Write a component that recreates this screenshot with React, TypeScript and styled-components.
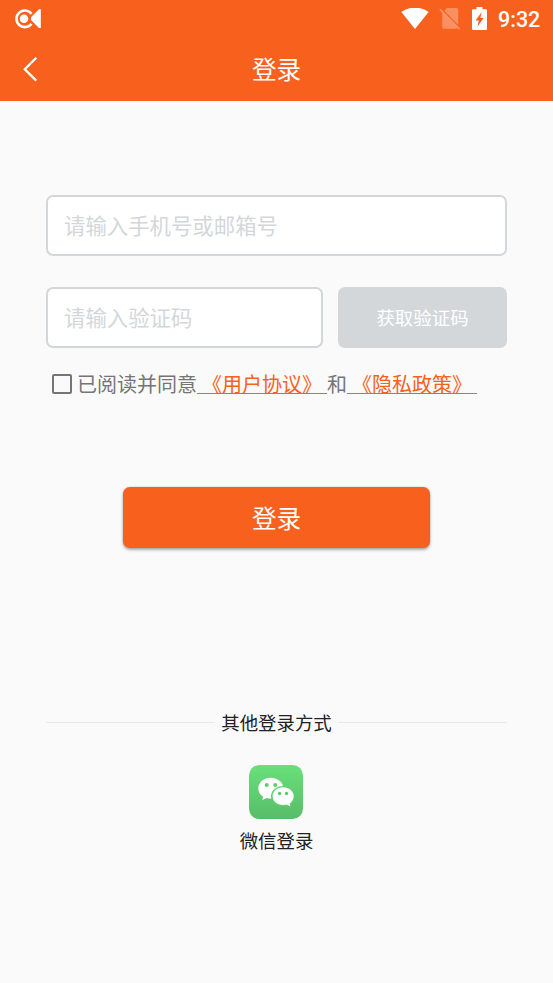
import React, { useState } from 'react';
import styled, { createGlobalStyle } from 'styled-components';

const ORANGE = '#f8611d';
const GRAY = '#d3d7da';

const GlobalStyle = createGlobalStyle`
  * { box-sizing: border-box; }
  body {
    margin: 0;
    background: #fafafa;
    font-family: Roboto, 'Noto Sans CJK SC', sans-serif;
  }
  button, input { font-family: inherit; }
`;

const Screen = styled.div`
  height: 983px;
  display: flex;
  flex-direction: column;
  background: #fafafa;
  overflow: hidden;
`;

const StatusBar = styled.div`
  height: 37px;
  flex: none;
  display: flex;
  align-items: center;
  justify-content: space-between;
  padding: 0 13px 0 14px;
  background: ${ORANGE};
  svg { display: block; }
`;

const StatusIcons = styled.div`
  display: flex;
  align-items: center;
`;

const Clock = styled.span`
  width: 42px;
  margin-left: 11px;
  padding-top: 2px;
  font-size: 21.5px;
  line-height: 36px;
  font-weight: 500;
  color: #fff;
  white-space: nowrap;
`;

const NavBar = styled.header`
  height: 64px;
  flex: none;
  display: grid;
  grid-template-columns: 60px 1fr 60px;
  align-items: center;
  background: ${ORANGE};
`;

const BackButton = styled.button`
  height: 64px;
  padding: 0 0 0 22px;
  border: 0;
  background: none;
  svg { display: block; }
`;

const Title = styled.h1`
  margin: 0;
  padding-top: 4px;
  text-align: center;
  font-size: 24.6px;
  line-height: 60px;
  font-weight: 400;
  color: #fff;
`;

const Form = styled.main`
  display: flex;
  flex-direction: column;
  padding: 94px 46px 0;
`;

const Field = styled.input`
  min-width: 0;
  width: 100%;
  height: 61px;
  padding: 2px 16px 0;
  border: 2px solid ${GRAY};
  border-radius: 7px;
  background: #fff;
  font-size: 21.4px;
  color: #222;
  outline: none;
  &::placeholder { color: ${GRAY}; opacity: 1; }
`;

const CodeRow = styled.div`
  display: grid;
  grid-template-columns: 277px 169px;
  justify-content: space-between;
  margin-top: 31px;
`;

const CodeButton = styled.button`
  height: 61px;
  padding: 0 0 2px;
  border: 0;
  border-radius: 7px;
  background: ${GRAY};
  font-size: 18.43px;
  color: #fff;
`;

const Agreement = styled.div`
  display: flex;
  align-items: flex-start;
  height: 30px;
  margin-top: 21px;
  padding-left: 6px;
  font-size: 20px;
  line-height: 32px;
  color: #757575;
  white-space: pre;
`;

const CheckBox = styled.button<{ $checked: boolean }>`
  width: 20px;
  height: 20px;
  margin: 5px 5px 0 0;
  padding: 0;
  border: 2px solid #757575;
  border-radius: 2px;
  background: ${(p) => (p.$checked ? ORANGE : 'transparent')};
`;

const PolicyLink = styled.a`
  height: 25px;
  border-bottom: 1px solid ${ORANGE};
  color: ${ORANGE};
`;

const LoginButton = styled.button`
  align-self: center;
  width: 307px;
  height: 61px;
  margin-top: 88px;
  padding: 0 0 2px;
  border: 0;
  border-radius: 7px;
  background: ${ORANGE};
  box-shadow: 0 2px 3px rgba(0, 0, 0, 0.3), 0 0 2px rgba(0, 0, 0, 0.2);
  font-size: 24.6px;
  color: #fff;
`;

const Divider = styled.div`
  display: flex;
  align-items: center;
  gap: 6px;
  height: 27px;
  margin-top: 161px;
  font-size: 18.43px;
  line-height: 28px;
  color: #212121;
  &::before, &::after {
    content: '';
    flex: 1;
    height: 1px;
    background: #e8e8e8;
  }
`;

const DividerLabel = styled.span`
  height: 27px;
  line-height: 30px;
`;

const WechatLogin = styled.div`
  align-self: center;
  display: flex;
  flex-direction: column;
  align-items: center;
  margin-top: 29px;
  font-size: 18.43px;
  line-height: 28px;
  color: #212121;
  svg { display: block; margin-bottom: 9px; }
`;

const RecorderIcon = () => (
  <svg width="27" height="20" viewBox="0 0 27 20">
    <path d="M17.500 4.900A8.300 8.300 0 1 0 17.500 14.700" fill="none" stroke="#fff" strokeWidth="2.600" />
    <circle cx="10" cy="9.700" r="4.300" fill="#fff" />
    <path d="M26.800.2v18.800h-1.800L17 11V8.300L25 .2z" fill="#fff" />
  </svg>
);

const WifiIcon = () => (
  <svg width="28" height="22" viewBox="0 0 28 22">
    <path d="M14 21L.4 4C4 1.300 8.500-.4 14-.4S24 1.300 27.600 4z" fill="#fff" />
  </svg>
);

const NoSimIcon = () => (
  <svg width="22" height="23" viewBox="0 0 22 23">
    <path d="M7.700 0h9.800q1.700 0 1.700 1.700v15.300L5.500 2.900zM3.200 4.800L18.300 19.900q-.3.800-1.200.8H4.800q-1.600 0-1.600-1.700z" fill="#fff" fillOpacity=".3" />
    <path d="M1 1.300L20.400 21" stroke="#fff" strokeOpacity=".35" strokeWidth="1.700" />
  </svg>
);

const BatteryIcon = () => (
  <svg width="15" height="23" viewBox="0 0 15 23">
    <path d="M4.500 0h6v2.300H14q1 0 1 1V22q0 1-1 1H1q-1 0-1-1V3.300q0-1 1-1h3.500z" fill="#fff" />
    <path d="M9.500 5.300L3.500 13.500h3.200L5.600 19.500l6-8.500H8.400z" fill={ORANGE} />
  </svg>
);

const BackIcon = () => (
  <svg width="17" height="26" viewBox="0 0 17 26">
    <path d="M14.300 1.700L2.800 13.200L14.300 24.600" fill="none" stroke="#fff" strokeWidth="2.300" />
  </svg>
);

const WechatIcon = () => (
  <svg width="54" height="54" viewBox="0 0 54 54">
    <defs>
      <linearGradient id="wechat" x1="0" y1="0" x2="0" y2="1">
        <stop offset="0" stopColor="#69e07b" />
        <stop offset="1" stopColor="#58bd67" />
      </linearGradient>
    </defs>
    <rect width="54" height="54" rx="10.500" fill="url(#wechat)" />
    <path d="M21.900 12.700c-7 0-12.600 4.700-12.600 10.700 0 3.400 1.800 6.300 4.700 8.200l-.7 3.500 4.200-2.200c1.400.4 2.900.6 4.400.6 7 0 12.600-4.500 12.600-10.100s-5.600-10.700-12.600-10.700z" fill="#fff" />
    <ellipse cx="34" cy="31.200" rx="12" ry="10.200" fill="#5fcf6f" />
    <path d="M34.100 22.300c-5.900 0-10.500 4-10.500 8.900s4.600 8.800 10.500 8.800c1.200 0 2.500-.2 3.600-.5l3.800 2-.8-3.100c2.500-1.700 4-4.300 4-7.200 0-4.900-4.700-8.900-10.600-8.900z" fill="#fff" />
    <g fill="#5bce6c">
      <circle cx="17.700" cy="19.900" r="2" />
      <circle cx="26.300" cy="19.900" r="2" />
      <circle cx="30.600" cy="28.500" r="1.700" />
      <circle cx="37.500" cy="28.500" r="1.700" />
    </g>
  </svg>
);

const SimSlot = styled.span`
  margin: 1px 11px 0 10px;
`;

export default function App() {
  const [agreed, setAgreed] = useState(false);
  return (
    <>
      <GlobalStyle />
      <Screen>
        <StatusBar>
          <RecorderIcon />
          <StatusIcons>
            <WifiIcon />
            <SimSlot><NoSimIcon /></SimSlot>
            <BatteryIcon />
            <Clock>9:32</Clock>
          </StatusIcons>
        </StatusBar>
        <NavBar>
          <BackButton aria-label="返回"><BackIcon /></BackButton>
          <Title>登录</Title>
        </NavBar>
        <Form>
          <Field placeholder="请输入手机号或邮箱号" />
          <CodeRow>
            <Field placeholder="请输入验证码" />
            <CodeButton>获取验证码</CodeButton>
          </CodeRow>
          <Agreement>
            <CheckBox
              role="checkbox"
              aria-checked={agreed}
              $checked={agreed}
              onClick={() => setAgreed(!agreed)}
            />
            <span>已阅读并同意</span>
            <PolicyLink>{' 《用户协议》 '}</PolicyLink>
            <span>和</span>
            <PolicyLink>{' 《隐私政策》 '}</PolicyLink>
          </Agreement>
          <LoginButton>登录</LoginButton>
          <Divider><DividerLabel>其他登录方式</DividerLabel></Divider>
          <WechatLogin>
            <WechatIcon />
            微信登录
          </WechatLogin>
        </Form>
      </Screen>
    </>
  );
}
